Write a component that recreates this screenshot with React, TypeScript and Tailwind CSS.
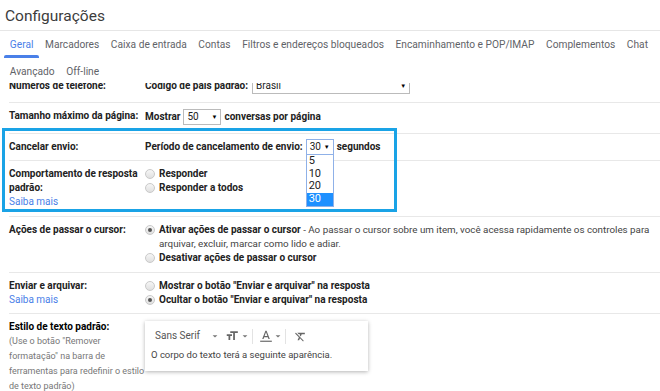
import type { ReactNode } from 'react'

const tabs = [
  'Geral',
  'Marcadores',
  'Caixa de entrada',
  'Contas',
  'Filtros e endereços bloqueados',
  'Encaminhamento e POP/IMAP',
  'Complementos',
  'Chat',
]

function Radio({ checked = false }: { checked?: boolean }) {
  return (
    <span className="mt-[2px] flex h-[10px] w-[10px] shrink-0 items-center justify-center rounded-full border border-[#c9c9c9] bg-gradient-to-b from-[#f6f6f6] to-[#e0e0e0]">
      {checked && <span className="h-[4px] w-[4px] rounded-full bg-[#555]" />}
    </span>
  )
}

function Arrow() {
  return <span className="text-[6px] leading-none text-black">▼</span>
}

function Row({ label, children, className = '' }: { label: ReactNode; children: ReactNode; className?: string }) {
  return (
    <div className={`ml-[9px] flex border-t border-[#e8e8e8] pt-[6px] ${className}`}>
      <div className="w-[136px] shrink-0 font-bold text-[#222]">{label}</div>
      <div className="flex-1 pr-[4px]">{children}</div>
    </div>
  )
}

function Option({ checked, children }: { checked?: boolean; children: ReactNode }) {
  return (
    <div className="flex items-start gap-[4px]">
      <Radio checked={checked} />
      <div>{children}</div>
    </div>
  )
}

function ToolArrow({ className = '' }: { className?: string }) {
  return (
    <svg width="8" height="8" viewBox="0 0 10 10" className={`fill-[#777] ${className}`}>
      <path d="M2 4h6L5 7z" />
    </svg>
  )
}

function Divider() {
  return <span className="mx-[3px] h-[15px] w-px bg-[#e3e3e3]" />
}

export default function App() {
  return (
    <div className="relative h-[391px] w-[660px] overflow-hidden bg-white font-['Roboto','Liberation_Sans',sans-serif] text-[10px] leading-[14px] text-[#222]">
      <header className="h-[31px] border-b border-[#e6e6e6] pl-[5px] pt-[5px]">
        <h1 className="text-[15.5px] leading-[22px] text-[#3c3c3c]">Configurações</h1>
      </header>

      <nav className="flex h-[27px] items-stretch pl-[4px] text-[10.2px] text-[#5f6368]">
        {tabs.map((t, i) => (
          <div key={t} className="relative flex items-center whitespace-nowrap px-[5.8px] pt-[1px]">
            <span className={i === 0 ? 'text-[#4a80e8]' : ''}>{t}</span>
            {i === 0 && <span className="absolute bottom-0 left-0 right-0 h-[3px] rounded-t-[2px] bg-[#4a80e8]" />}
          </div>
        ))}
      </nav>
      <nav className="flex h-[22px] items-center pl-[4px] pt-[6px] text-[10.2px] text-[#5f6368]">
        <div className="px-[5.8px]">Avançado</div>
        <div className="px-[5.8px]">Off-line</div>
      </nav>

      <div className="mt-[3px] h-[308px] overflow-hidden">
        <div className="-mt-[10px]">
          <div className="ml-[9px] flex h-[29px] pt-[6px]">
            <div className="w-[136px] shrink-0 font-bold">Números de telefone:</div>
            <div className="flex h-[14px] items-center gap-[4px] font-bold">
              Código de país padrão:
              <span className="flex h-[15px] w-[158px] items-center justify-between border border-[#bbb] px-[3px] font-normal">
                Brasil <Arrow />
              </span>
            </div>
          </div>

          <Row label="Tamanho máximo da página:" className="h-[31px]">
            <div className="flex h-[16px] items-center gap-[3px] font-bold">
              Mostrar
              <span className="flex h-[16px] w-[38px] items-center justify-between border border-[#bbb] px-[3px] font-normal">
                50 <Arrow />
              </span>
              conversas por página
            </div>
          </Row>

          <Row label="Cancelar envio:" className="h-[27px]">
            <div className="flex h-[14px] items-center gap-[3px] font-bold">
              Período de cancelamento de envio:
              <span className="relative flex h-[16px] w-[28px] items-center justify-between border border-[#8fb1e8] px-[3px] font-normal">
                30 <Arrow />
                <div className="absolute left-[-1px] top-[14px] z-10 w-[28px] border border-[#8fb1e8] bg-white text-[11px] leading-[12.7px]">
                  <div className="px-[2px]">5</div>
                  <div className="px-[2px]">10</div>
                  <div className="px-[2px]">20</div>
                  <div className="bg-[#1e90ff] px-[2px] text-white">30</div>
                </div>
              </span>
              segundos
            </div>
          </Row>

          <Row
            className="h-[56px]"
            label={
              <>
                Comportamento de resposta
                <br />
                padrão:
                <br />
                <span className="font-normal text-[#4a80e8]">Saiba mais</span>
              </>
            }
          >
            <div className="font-bold">
              <Option>Responder</Option>
              <Option>Responder a todos</Option>
            </div>
          </Row>

          <Row label="Ações de passar o cursor:" className="h-[56px]">
            <Option checked>
              <span className="whitespace-nowrap">
                <span className="font-bold">Ativar ações de passar o cursor</span>
                <span className="text-[9.8px] text-[#444]">
                  {' '}- Ao passar o cursor sobre um item, você acessa rapidamente os controles para
                </span>
              </span>
              <br />
              <span className="text-[9.8px] text-[#444]">arquivar, excluir, marcar como lido e adiar.</span>
            </Option>
            <div className="font-bold">
              <Option>Desativar ações de passar o cursor</Option>
            </div>
          </Row>

          <Row
            className="h-[41px]"
            label={
              <>
                Enviar e arquivar:
                <br />
                <span className="font-normal text-[#4a80e8]">Saiba mais</span>
              </>
            }
          >
            <div className="font-bold">
              <Option>Mostrar o botão "Enviar e arquivar" na resposta</Option>
              <Option checked>Ocultar o botão "Enviar e arquivar" na resposta</Option>
            </div>
          </Row>

          <Row
            label={
              <>
                <span className="text-black">Estilo de texto padrão:</span>
                <div className="whitespace-nowrap text-[9px] font-normal leading-[15px] text-[#777]">
                  (Use o botão "Remover
                  <br />
                  formatação" na barra de
                  <br />
                  ferramentas para redefinir o estilo
                  <br />
                  de texto padrão)
                </div>
              </>
            }
          >
            <div className="mt-[1px] w-[223px] bg-white px-[6px] pb-[9px] pt-[5px] shadow-[0_1px_4px_rgba(0,0,0,0.3)]">
              <div className="flex h-[20px] items-center pl-[4px] text-[#555]">
                <span className="w-[56px]">Sans Serif</span>
                <ToolArrow />
                <svg width="14" height="14" viewBox="0 0 24 24" className="ml-[6px] fill-[#666]">
                  <path d="M9 4v3h5v12h3V7h5V4H9zm-6 8h3v7h3v-7h3V9H3v3z" />
                </svg>
                <ToolArrow className="ml-[2px]" />
                <Divider />
                <svg width="14" height="14" viewBox="0 0 24 24" className="ml-[3px] fill-[#666]">
                  <path d="M11 3L5.5 17h2.25l1.12-3h6.25l1.12 3h2.25L13 3h-2zm-1.38 9L12 5.67 14.38 12H9.62z" />
                  <rect x="2" y="20" width="20" height="2" />
                </svg>
                <ToolArrow className="ml-[1px]" />
                <Divider />
                <svg width="13" height="13" viewBox="0 0 24 24" className="ml-[5px] fill-[#666]">
                  <path d="M3.27 5L2 6.27l6.97 6.97L6.5 19h3l1.57-3.66L16.73 21 18 19.73 3.55 5.27 3.27 5zM6 5v.18L8.82 8h2.4l-.72 1.68 2.1 2.1L14.21 8H20V5H6z" />
                </svg>
              </div>
              <div className="mt-[2px] whitespace-nowrap text-[9.5px] text-[#444]">O corpo do texto terá a seguinte aparência.</div>
            </div>
          </Row>
        </div>
      </div>

      <div className="pointer-events-none absolute left-[2px] top-[128px] h-[84px] w-[395px] border-[3px] border-[#1aa3e6]" />
    </div>
  )
}
